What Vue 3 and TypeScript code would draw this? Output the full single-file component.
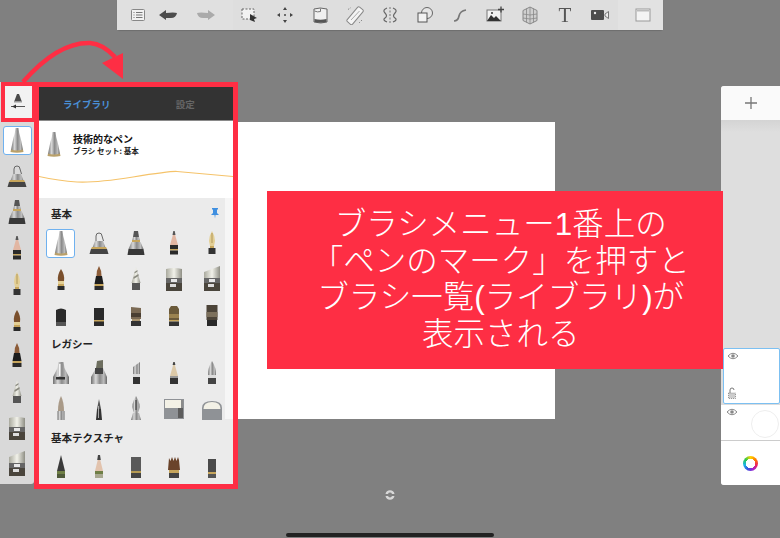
<script setup lang="ts">
import { h } from 'vue'

type Layer = [string, string, string?]

const box = (x: number, y: number, w: number, h: number) => `M${x} ${y}h${w}v${h}h${-w}z`
const gold = '#c6a55c'
const ink = '#2a2a2a'

const brushes: Record<string, Layer[]> = {
  tech: [['M10.500 3h3q.5 5 1.500 8t3 14q-6 2-12 0 2-11 3-14t1.500-8z', 'url(#steel)'], ['M6 24.500q6 2 12 0l.5 2.500q-6.500 1.500-13 0z', '#b9a06a']],
  bell: [['M9 13V8q0-3 3-3t3 3l1.500 5', 'none', '#666'], ['M8 13h8l3 8H5z', 'url(#steel)'], ['M5 19h14l1 2H4z', gold], ['M4 21h16l1.500 5h-19z', '#444']],
  tower: [['M10 3h4l1 6H9z', '#555'], ['M9 9h6l1 5H8z', 'url(#steel)'], [box(8, 12, 8, 2), gold], ['M7.500 14h9l3 7h-15z', 'url(#steel)'], ['M4.500 21h15l1 6h-17z', '#383838']],
  pencil: [['M12 3l4 14H8z', '#e2b6a2'], ['M11.300 3h1.400l.8 4h-3z', '#555'], [box(8, 17, 8, 4), ink], [box(8, 21, 8, 1.500), gold], [box(8, 22.500, 8, 4), ink]],
  nib: [['M12 3q3 5 3 10l-1 5h-4l-1-5q0-5 3-10z', '#e3cf95'], ['M11.600 5h.8v10h-.8z', '#a58a4a'], [box(10, 18, 4, 2), gold], [box(8.500, 20, 7, 6), '#333']],
  brush: [['M12 5q4 6 3 12H9q-1-6 3-12z', '#7a4f2c'], [box(9, 17, 6, 3), '#e3cf95'], [box(9, 20, 6, 2), gold], [box(8.500, 22, 7, 4), ink]],
  tallBrush: [['M12 2q3 5 2.500 10h-5Q9 7 12 2z', '#8c5c38'], ['M9 12h6l1.500 8h-9z', '#1d1d1d'], [box(7.500, 20, 9, 2), gold], [box(7.500, 22, 9, 4), ink]],
  air: [['M12 3l4.500 16h-9z', 'url(#pale)'], ['M9.500 13l5-3v2l-5 3zM10.500 8l3-2v1.500l-3 2z', '#8a8a80'], [box(8, 19, 8, 7), '#555']],
  marker: [['M4 5q8-2 16 0v9H4z', 'url(#pale)'], [box(4, 14, 16, 5), '#666'], [box(9, 15, 6, 3), '#e8e8e8'], [box(4, 19, 16, 8), '#4a453c'], [box(8, 20, 6, 3), '#ddd']],
  marker2: [['M4 8l16-6v12H4z', 'url(#pale)'], [box(4, 14, 16, 5), '#666'], [box(9, 15, 6, 3), '#e8e8e8'], [box(4, 19, 16, 8), '#4a453c'], [box(8, 20, 6, 3), '#ddd']],
  stub: [['M7 10q5-3 10 0v15H7z', ink], [box(7, 22, 10, 4), '#555']],
  stub2: [['M7 8h10v18H7z', ink], [box(7, 20, 10, 1.500), gold]],
  brownBlock: [['M7 7l10 1v11H7z', '#7b6a54'], [box(7, 13, 10, 4), '#4a3f32'], [box(8, 19, 8, 2), '#a9946f'], [box(7, 21, 10, 5), '#333']],
  goldBlock: [['M9 6h6l2 3v11H7V9z', '#6b5a3a'], [box(7, 14, 10, 4), '#9b8350'], [box(7, 20, 10, 1.500), gold], [box(7, 21.500, 10, 4.500), '#333']],
  darkBlock: [['M6.500 5h11v15h-11z', '#4b4338'], [box(6.500, 12, 11, 5), '#7c705c'], [box(7, 20, 10, 6), ink]],
  bottle: [['M9.500 4h5l1 6 4.500 9v7H4v-7l4.500-9z', 'url(#steel)'], [box(7, 19, 9, 2.500), '#333'], [box(10, 6, 1.500, 12), '#f5f5f5']],
  wedge: [['M10 3l6-1v8H9z', '#6d6e5f'], ['M9 10h7l4 9v7H4v-7z', 'url(#steel)'], [box(8, 10, 8, 6), '#444']],
  chisel: [['M9 9l7-5v12H9z', 'url(#steel)'], [box(9, 16, 7, 3), '#ddd'], [box(9, 19, 7, 7), '#333']],
  woodPencil: [['M12 4l4 14H8z', '#dcc9a8'], ['M11.300 4h1.400l.7 3h-2.800z', '#444'], [box(8, 18, 8, 2), '#999'], [box(8, 20, 8, 6), '#333']],
  bullet: [['M12 3q4 6 4 14H8q0-8 4-14z', 'url(#steel)'], [box(8, 17, 8, 3), '#ddd'], [box(8, 20, 8, 6), '#444']],
  taupe: [['M12 2q3 6 3 15H9q0-9 3-15z', '#a99a88'], [box(8.500, 17, 7, 9), 'url(#steel)']],
  smallDark: [['M12 5l2 10H10z', '#555'], ['M10 15h4l1 11H9z', '#333'], [box(11, 12, 1, 12), '#aaa']],
  metalNib: [['M12 2q5 8 3 14l-1 3h-4l-1-3q-2-6 3-14z', 'url(#steel)'], [box(11.500, 6, 1, 10), '#333'], ['M9 19h6l2 7H7z', 'url(#steel)']],
  eraser: [[box(2, 5, 20, 20), '#8f9296'], [box(3, 6, 16, 8), '#f3f1e6'], [box(16, 14, 5, 10), '#5c5c5c'], [box(19, 6, 2, 8), '#8a8a8a']],
  dome: [['M2 26V14q0-7 10-7t10 7v12z', '#8f9296'], ['M3.500 15q0-7 8.500-7t8.500 7z', '#f3f1e6']],
  texCone: [['M12 3l4 16H8z', '#3a3a3a'], [box(8, 19, 8, 3), '#6f7f46'], [box(8, 22, 8, 4), '#4f5a3a']],
  texPencil: [['M12 3l4 16H8z', '#e2c3ad'], ['M11 3h2l.8 5h-3.600z', '#444'], [box(8, 19, 8, 3), '#6f7f46'], [box(8, 22, 8, 4), '#a8a890']],
  texBlock: [['M7 5h10v16H7z', '#5a5a5a'], [box(7, 19, 10, 2), '#b59a52'], [box(7, 21, 10, 5), '#444']],
  bristle: [['M6 18l1-12 1.500 3L10 5l1.500 4L13 5l1.500 4L16 5l1 3 1 10z', '#6a432a'], [box(7, 18, 10, 3), gold], [box(7, 21, 10, 5), '#444']],
  texSmall: [[box(8, 7, 8, 13), '#4a4a4a'], [box(8, 20, 8, 2), gold], [box(8, 22, 8, 4), '#555']],
}

const BrushIcon = (props: { name: string }) =>
  h('svg', { width: 24, height: 30, viewBox: '0 0 24 30', style: 'display:block' },
    brushes[props.name].map(([d, fill, stroke]) => h('path', { d, fill, stroke: stroke ?? 'none' })))
BrushIcon.props = ['name']

const sideList = ['tech', 'bell', 'tower', 'pencil', 'nib', 'brush', 'tallBrush', 'air', 'marker', 'marker2']

const sections = [
  {
    title: '基本',
    pinned: true,
    items: ['tech', 'bell', 'tower', 'pencil', 'nib', 'brush', 'tallBrush', 'air', 'marker', 'marker2', 'stub', 'stub2', 'brownBlock', 'goldBlock', 'darkBlock'],
  },
  {
    title: 'レガシー',
    pinned: false,
    items: ['bottle', 'wedge', 'chisel', 'woodPencil', 'bullet', 'taupe', 'smallDark', 'metalNib', 'eraser', 'dome'],
  },
  {
    title: '基本テクスチャ',
    pinned: false,
    items: ['texCone', 'texPencil', 'texBlock', 'bristle', 'texSmall'],
  },
]
</script>

<template>
  <div class="page">
    <svg class="defs" width="0" height="0">
      <defs>
        <linearGradient id="steel">
          <stop offset="0" stop-color="#6f6f6f" />
          <stop offset="0.3" stop-color="#d8d8d8" />
          <stop offset="0.55" stop-color="#8a8a8a" />
          <stop offset="0.8" stop-color="#bdbdbd" />
          <stop offset="1" stop-color="#666" />
        </linearGradient>
        <linearGradient id="pale">
          <stop offset="0" stop-color="#a9a99d" />
          <stop offset="0.5" stop-color="#f2f2ea" />
          <stop offset="1" stop-color="#8f8f85" />
        </linearGradient>
      </defs>
    </svg>

    <div class="paper"></div>

    <header class="toolbar">
      <div class="tool-group first">
        <span class="tool">
          <svg width="18" height="18" viewBox="0 0 18 18"><rect x="2.500" y="3.500" width="13" height="11" rx="1" fill="#f2f2f2" stroke="#888" /><path d="M4.500 6.500h1M7 6.500h6.500M4.500 9h1M7 9h6.500M4.500 11.500h1M7 11.500h6.500" stroke="#777" /></svg>
        </span>
        <span class="tool">
          <svg width="22" height="18" viewBox="0 0 22 18"><path d="M2 9l7-5v3q8-1 11 0-1 5-6 5H9v2z" fill="#4d4d4d" /></svg>
        </span>
        <span class="tool redo">
          <svg width="22" height="18" viewBox="0 0 22 18"><path d="M20 9l-7-5v3Q5 6 2 7q1 5 6 5h5v2z" fill="#aaa" /></svg>
        </span>
      </div>
      <div class="tool-group">
        <span class="tool">
          <svg width="20" height="20" viewBox="0 0 20 20"><rect x="2" y="4" width="12" height="10" fill="#f2f2f2" stroke="#666" stroke-dasharray="2 1.500" /><path d="M10 9l7 4-3 1 1 3-5-2z" fill="#333" /></svg>
        </span>
        <span class="tool">
          <svg width="20" height="20" viewBox="0 0 20 20"><g fill="#444"><circle cx="10" cy="10" r="1" /><path d="M10 2l2 3H8zM10 18l2-3H8zM2 10l3-2v4zM18 10l-3-2v4z" /></g></svg>
        </span>
        <span class="tool">
          <svg width="20" height="20" viewBox="0 0 20 20"><path d="M4 4q6-2 13 0v13q-6 2-13 0z" fill="#f0f0f0" stroke="#666" /><path d="M4.500 14q6 1.500 12 0v3q-6 1.500-12 0z" fill="#555" /><path d="M4.500 6q3 1.500 6 .5v-3" fill="none" stroke="#777" /></svg>
        </span>
        <span class="tool">
          <svg width="20" height="20" viewBox="0 0 20 20"><rect x="7" y="1" width="7" height="19" rx="1.500" transform="rotate(40 10 10)" fill="#f4f4f4" stroke="#888" /><path d="M3 4.500l3-2M17 15l-3 3" stroke="#888" stroke-dasharray="1.500 1.500" /><path d="M6 15L14.500 6" stroke="#aaa" /></svg>
        </span>
        <span class="tool">
          <svg width="20" height="20" viewBox="0 0 20 20"><path d="M10 2v16" stroke="#777" stroke-dasharray="2 1.500" /><path d="M7 3Q2 5 5 8t0 5 2 4M13 3q5 2 2 5t0 5-2 4" fill="none" stroke="#666" stroke-width="1.200" /></svg>
        </span>
        <span class="tool">
          <svg width="20" height="20" viewBox="0 0 20 20"><circle cx="12" cy="8" r="5.500" fill="#e6e6e6" stroke="#666" /><rect x="3" y="8" width="9" height="9" fill="#f2f2f2" stroke="#555" /></svg>
        </span>
        <span class="tool">
          <svg width="20" height="20" viewBox="0 0 20 20"><path d="M4 16q4 0 5-5t7-6" fill="none" stroke="#777" stroke-width="1.700" /></svg>
        </span>
        <span class="tool">
          <svg width="20" height="20" viewBox="0 0 20 20"><rect x="2" y="5" width="14" height="11" fill="#f2f2f2" stroke="#777" /><path d="M2 16l4-6 3 3 2-2 5 5z" fill="#333" /><circle cx="7" cy="8" r="1" fill="#333" /><path d="M16 1.500v6M13 4.500h6" stroke="#444" stroke-width="1.300" /></svg>
        </span>
        <span class="tool">
          <svg width="20" height="20" viewBox="0 0 20 20"><path d="M10 2l7 3.500v10L10 19l-7-3.500v-10z" fill="#cfcfcf" stroke="#888" /><path d="M6.500 3.500v14M10 2v17M13.500 3.500v14M3 9q7 2 14 0M3 13q7 2 14 0" fill="none" stroke="#888" stroke-width=".8" /></svg>
        </span>
        <span class="tool glyph">T</span>
        <span class="tool">
          <svg width="20" height="20" viewBox="0 0 20 20"><rect x="1" y="5" width="13" height="10" rx="1" fill="#4d4d4d" /><circle cx="5" cy="8" r="1.200" fill="#eee" /><path d="M15 9l3.500-2.500v7L15 11z" fill="#eee" stroke="#777" /></svg>
        </span>
      </div>
      <div class="tool-group last">
        <span class="tool">
          <svg width="18" height="18" viewBox="0 0 18 18"><rect x="2" y="3" width="14" height="12" fill="#f4f4f4" stroke="#999" /><rect x="3" y="4" width="12" height="1.500" fill="#bbb" /></svg>
        </span>
      </div>
    </header>

    <aside class="brush-bar">
      <div class="pen-cell">
        <svg class="pen-mark" width="18" height="18" viewBox="0 0 18 18"><path d="M8 1h2l3 8H5z" fill="#4a4a4a" /><path d="M5 8h8v1.500H5z" fill="#999" /><path d="M2 13.500h14" stroke="#555" /><path d="M3 13.500l4-2v4z" fill="#333" /></svg>
      </div>
      <div class="side-list">
        <div v-for="(name, i) in sideList" :key="name" class="side-item">
          <span class="icon-tile" :class="{ active: i === 0 }"><BrushIcon :name="name" /></span>
        </div>
      </div>
    </aside>

    <div class="brush-panel">
      <div class="tabs">
        <span class="tab on">ライブラリ</span>
        <span class="tab">設定</span>
      </div>
      <div class="info">
        <div class="info-head">
          <span class="info-icon"><BrushIcon name="tech" /></span>
          <div>
            <div class="info-title">技術的なペン</div>
            <div class="info-sub">ブラシ セット: 基本</div>
          </div>
        </div>
        <svg class="stroke" width="194" height="20" viewBox="0 0 194 20">
          <path d="M0 7.500Q20 12 38 13t56-5 44-5.500 56 5" fill="none" stroke="#f5c36a" stroke-width="1.200" />
        </svg>
      </div>
      <div class="library">
        <section v-for="s in sections" :key="s.title" class="lib-section">
          <div class="lib-title">
            <span>{{ s.title }}</span>
            <svg v-if="s.pinned" class="pin" width="10" height="12" viewBox="0 0 10 12"><path d="M2 1h6v1L7 3v3l2 2H5.500L5 11.500 4.500 8H1l2-2V3L2 2z" fill="#3f8fe0" /></svg>
          </div>
          <div class="lib-grid">
            <div v-for="(name, i) in s.items" :key="name" class="lib-cell">
              <span class="icon-tile" :class="{ active: s.pinned && i === 0 }"><BrushIcon :name="name" /></span>
            </div>
          </div>
        </section>
      </div>
    </div>

    <svg class="arrow" width="130" height="50" viewBox="0 0 130 50">
      <path d="M23 42Q58 2 90 3q13 1 25 14" fill="none" stroke="#fe2e44" stroke-width="4.500" />
      <path d="M102 23l21-10v26z" fill="#fe2e44" />
    </svg>

    <aside class="layer-bar">
      <div class="add-layer">
        <svg width="14" height="14" viewBox="0 0 14 14"><path d="M7 1v12M1 7h12" stroke="#777" stroke-width="1.300" /></svg>
      </div>
      <div class="layer-space"></div>
      <div class="layer selected">
        <svg class="eye" width="12" height="8" viewBox="0 0 12 8"><path d="M1 4q5-5.500 10 0-5 5.500-10 0z" fill="none" stroke="#888" /><circle cx="6" cy="4" r="1.800" fill="#888" /></svg>
        <svg class="lock" width="10" height="12" viewBox="0 0 10 12"><path d="M3 6V3q0-2 2-2t2 2" fill="none" stroke="#777" /><rect x="1.500" y="6" width="7" height="5.500" fill="#ccc" stroke="#777" stroke-width=".7" stroke-dasharray="1 1" /></svg>
      </div>
      <div class="layer plain">
        <svg class="eye" width="12" height="8" viewBox="0 0 12 8"><path d="M1 4q5-5.500 10 0-5 5.500-10 0z" fill="none" stroke="#888" /><circle cx="6" cy="4" r="1.800" fill="#888" /></svg>
        <span class="dot"></span>
      </div>
      <div class="color-cell"><span class="wheel"></span></div>
    </aside>

    <div class="callout">
      <span>ブラシメニュー1番上の</span>
      <span>「ペンのマーク」を押すと</span>
      <span>ブラシ一覧(ライブラリ)が</span>
      <span>表示される</span>
    </div>

    <svg class="rotate" width="12" height="12" viewBox="0 0 12 12"><path d="M1.500 5a4.600 4.600 0 0 1 9 0h-2.500a2.100 2.100 0 0 0-4 0zM1.500 7a4.600 4.600 0 0 0 9 0h-2.500a2.100 2.100 0 0 1-4 0z" fill="#d8d8d8" /></svg>
    <span class="home-bar"></span>
  </div>
</template>

<style scoped>
.page {
  position: relative;
  width: 780px;
  height: 538px;
  overflow: hidden;
  background: #808080;
  font-family: "Noto Sans CJK JP", "Liberation Sans", sans-serif;
}
.defs {
  position: absolute;
}
.paper {
  position: absolute;
  left: 238px;
  top: 122px;
  width: 317px;
  height: 297px;
  background: #fff;
}

.toolbar {
  position: absolute;
  left: 117px;
  top: 0;
  width: 546px;
  height: 30px;
  display: flex;
  background: #dedede;
  border-radius: 0 0 3px 3px;
  box-shadow: 0 1px 1px rgba(0, 0, 0, 0.15);
}
.tool-group {
  display: flex;
  align-items: center;
}
.tool-group.first {
  width: 115.500px;
  padding-left: 6px;
  box-sizing: border-box;
  background: #e0e0e0;
}
.tool-group.last {
  flex: 1;
  justify-content: flex-end;
  padding-right: 11px;
  background: #e2e2e2;
}
.tool {
  width: 35px;
  height: 30px;
  display: flex;
  align-items: center;
  justify-content: center;
  filter: blur(0.4px);
}
.first .tool {
  width: 30px;
}
.first .redo {
  margin-left: 8px;
}
.last .tool {
  width: 18px;
}
.glyph {
  font-family: "Liberation Serif", serif;
  font-size: 21px;
  color: #555;
}

.brush-bar {
  position: absolute;
  left: 0;
  top: 82px;
  width: 34px;
  height: 402px;
  background: #d9d9d9;
  border-radius: 0 0 3px 0;
}
.pen-cell {
  box-sizing: border-box;
  width: 35px;
  height: 40px;
  margin-left: 1px;
  display: flex;
  align-items: center;
  justify-content: center;
  background: #f2f2f2;
  border: 4.500px solid #fe2e44;
}
.pen-mark {
  margin-right: 2px;
  filter: blur(0.3px);
}
.side-item {
  height: 36px;
  display: flex;
  align-items: center;
  justify-content: center;
}
.icon-tile {
  box-sizing: border-box;
  width: 29px;
  height: 29px;
  display: flex;
  align-items: center;
  justify-content: center;
  border-radius: 3px;
  border: 1.500px solid transparent;
}
.icon-tile svg,
.info-icon svg {
  filter: blur(0.4px);
}
.icon-tile.active {
  background: #fff;
  border-color: #6fb1ef;
}

.brush-panel {
  position: absolute;
  left: 34px;
  top: 82px;
  box-sizing: border-box;
  width: 204px;
  height: 407px;
  display: flex;
  flex-direction: column;
  overflow: hidden;
  border: 5px solid #fe2e44;
  background: #ebebeb;
}
.tabs {
  flex: none;
  height: 33px;
  display: flex;
  background: #333;
  border-bottom: 1px solid #8a8a8a;
}
.tab {
  flex: 1;
  display: flex;
  align-items: center;
  justify-content: center;
  font-size: 9.500px;
  font-weight: 700;
  color: #666;
}
.tab + .tab {
  padding-left: 3px;
}
.tab.on {
  color: #4a8fd6;
}
.info {
  flex: none;
  box-sizing: border-box;
  height: 77px;
  padding-top: 6px;
  background: #fff;
}
.info-head {
  height: 33px;
  display: flex;
  align-items: center;
  gap: 7px;
  padding-left: 3px;
}
.info-title {
  font-size: 10px;
  font-weight: 700;
  line-height: 13px;
  color: #111;
}
.info-sub {
  font-size: 7.500px;
  font-weight: 700;
  line-height: 11px;
  color: #222;
}
.stroke {
  display: block;
  margin-top: 9px;
}
.library {
  flex: 1;
  padding-left: 3px;
  position: relative;
}
.library::after {
  content: "";
  position: absolute;
  right: 0;
  top: 0;
  width: 8px;
  height: 221px;
  background: #f6f6f6;
}
.lib-title {
  box-sizing: border-box;
  height: 20px;
  display: flex;
  align-items: center;
  justify-content: space-between;
  padding: 0 13px 0 9px;
  font-size: 10.500px;
  font-weight: 700;
  color: #222;
}
.lib-section:first-child .lib-title {
  height: 27px;
  padding-top: 3px;
}
.lib-section + .lib-section .lib-grid {
  margin-top: 2px;
}
.lib-grid {
  display: grid;
  grid-template-columns: repeat(5, 37.700px);
  grid-auto-rows: 36px;
}
.lib-cell {
  display: flex;
  align-items: center;
  justify-content: center;
}

.arrow {
  position: absolute;
  left: 0;
  top: 40px;
}

.callout {
  position: absolute;
  left: 267px;
  top: 191px;
  box-sizing: border-box;
  width: 455.500px;
  height: 177.500px;
  padding: 0 0 1px 12px;
  display: flex;
  flex-direction: column;
  align-items: center;
  justify-content: center;
  background: #fe2e44;
  color: #fff;
  font-family: "Liberation Sans", "Noto Sans CJK JP", sans-serif;
  font-size: 31.500px;
  font-weight: 300;
  line-height: 36.500px;
  white-space: nowrap;
}

.layer-bar {
  position: absolute;
  left: 721px;
  top: 86px;
  width: 59px;
  height: 399px;
  display: flex;
  flex-direction: column;
  background: #dcdcdc;
  border-radius: 3px 0 0 3px;
  overflow: hidden;
}
.add-layer {
  flex: none;
  height: 34px;
  display: flex;
  align-items: center;
  justify-content: center;
  background: #fafafa;
}
.layer-space {
  flex: 1;
  background: linear-gradient(#d4d4d4, #dedede 12px);
}
.layer {
  position: relative;
  flex: none;
  box-sizing: border-box;
  background: #fff;
}
.layer.selected {
  height: 56px;
  margin-left: 2px;
  border: 1.500px solid #7cc0f2;
  border-radius: 2px;
}
.layer.plain {
  height: 36px;
  margin-top: 1px;
  border-bottom: 1px solid #ccc;
  overflow: hidden;
}
.eye {
  position: absolute;
  left: 3px;
  top: 3px;
}
.plain .eye {
  left: 5px;
}
.lock {
  position: absolute;
  left: 3px;
  bottom: 4px;
}
.dot {
  position: absolute;
  left: 30px;
  top: 5px;
  width: 26px;
  height: 26px;
  border-radius: 50%;
  border: 1px solid #eee;
}
.color-cell {
  flex: none;
  height: 44px;
  display: flex;
  align-items: center;
  justify-content: center;
  background: #fff;
}
.wheel {
  box-sizing: border-box;
  width: 15px;
  height: 15px;
  border-radius: 50%;
  background:
    radial-gradient(circle, #fff 0 4.500px, transparent 5px),
    conic-gradient(#ffd400, #ff7a00, #f0245c, #a51fd0, #3a4fe0, #19b5e8, #2cc84a, #ffd400);
}

.rotate {
  position: absolute;
  left: 384px;
  top: 489px;
  filter: blur(0.3px);
}
.home-bar {
  position: absolute;
  left: 286px;
  top: 533px;
  width: 208px;
  height: 4px;
  border-radius: 2px;
  background: #222;
}
</style>

<style>
body {
  margin: 0;
}
</style>
